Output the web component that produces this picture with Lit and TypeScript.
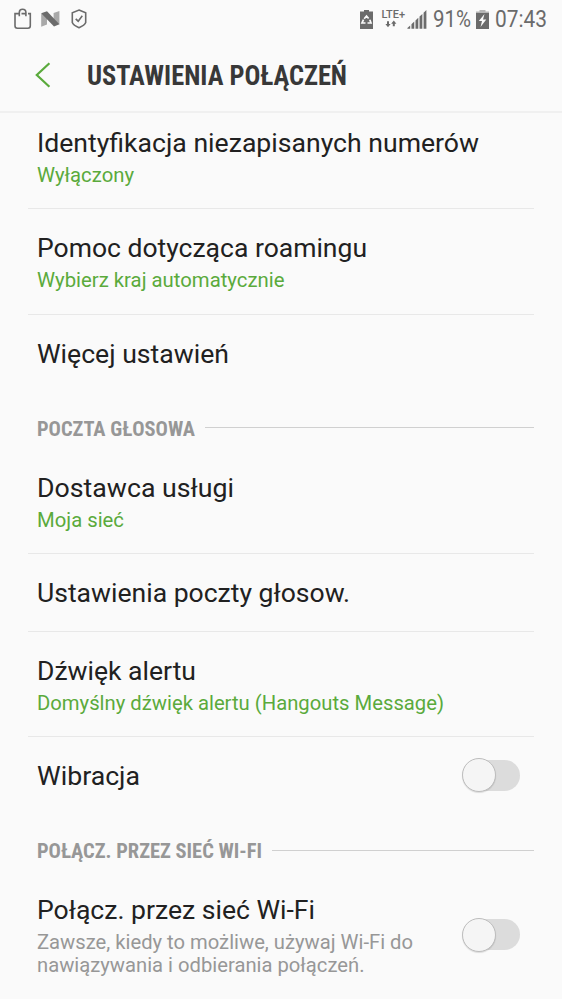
import { LitElement, html, css, svg, nothing } from "lit";
import { customElement, property } from "lit/decorators.js";

@customElement("fit-text")
class FitText extends LitElement {
  @property() text = "";
  @property({ type: Number }) width = 100;
  @property({ type: Number }) size = 20;
  @property({ type: Number }) line = 24;
  static styles = css`
    :host { display: block; flex: none; }
    svg { display: block; overflow: visible; }
    text { font-family: Roboto, "Liberation Sans", sans-serif; font-weight: inherit; font-stretch: inherit; fill: currentColor; }
  `;
  render() {
    const y = this.line / 2 + this.size * 0.345;
    return html`<svg width=${this.width} height=${this.line}>
      <text x="0" y=${y} font-size=${this.size} textLength=${this.width} lengthAdjust="spacingAndGlyphs">${this.text}</text>
    </svg>`;
  }
}

@customElement("toggle-switch")
class ToggleSwitch extends LitElement {
  static styles = css`
    :host { display: flex; align-items: center; width: 58px; height: 34px; flex: none; margin: -3px 0 -1px; }
    .track { width: 50px; height: 31px; margin-left: 8px; border-radius: 16px; background: #dcdcdc; display: flex; align-items: center; }
    .knob { box-sizing: border-box; width: 34px; height: 34px; margin-left: -8px; flex: none; border-radius: 50%; background: #f5f5f5; border: 1px solid #bdbdbd; box-shadow: 0 1px 1px rgba(0,0,0,.12); }
  `;
  render() {
    return html`<div class="track"><div class="knob"></div></div>`;
  }
}

type Label = [string, number];
interface Row { title: Label; subs?: Label[]; muted?: boolean; toggle?: boolean; last?: boolean; first?: boolean }
interface Group { heading?: Label; rows: Row[] }

const groups: Group[] = [
  { rows: [
    { title: ["Identyfikacja niezapisanych numerów", 442], subs: [["Wyłączony", 97]], first: true },
    { title: ["Pomoc dotycząca roamingu", 330], subs: [["Wybierz kraj automatycznie", 247.5]] },
    { title: ["Więcej ustawień", 192], last: true },
  ] },
  { heading: ["POCZTA GŁOSOWA", 158], rows: [
    { title: ["Dostawca usługi", 197], subs: [["Moja sieć", 87]] },
    { title: ["Ustawienia poczty głosow.", 313] },
    { title: ["Dźwięk alertu", 159], subs: [["Domyślny dźwięk alertu (Hangouts Message)", 407]] },
    { title: ["Wibracja", 103], toggle: true, last: true },
  ] },
  { heading: ["POŁĄCZ. PRZEZ SIEĆ WI-FI", 225], rows: [
    { title: ["Połącz. przez sieć Wi-Fi", 278], subs: [["Zawsze, kiedy to możliwe, używaj Wi-Fi do", 376], ["nawiązywania i odbierania połączeń.", 327.5]], muted: true, toggle: true, last: true },
  ] },
];

// Each bar has a top edge that follows the rising diagonal.
const bars = [0, 1, 2, 3, 4].map((i) => {
  const x = 0.4 + i * 4.05;
  const top = (v: number) => 18.5 - v * 0.95;
  return svg`<path d="M${x} 18.7V${top(x)}L${x + 2.8} ${top(x + 2.8)}V18.7Z"/>`;
});

@customElement("app-root")
class AppRoot extends LitElement {
  static styles = css`
    :host { display: block; width: 562px; height: 999px; overflow: hidden; background: #fafafa; color: #212121; font-family: Roboto, sans-serif; }
    svg { display: block; flex: none; }
    .status { height: 38px; display: flex; align-items: center; color: #6b6b6b; padding: 0 15px 0 13px; }
    .spacer { flex: 1; }
    .status .bag { margin-right: 8px; }
    .status .nougat { margin-right: 11px; }
    .saver { margin-right: 8px; }
    .signal { margin: 0 6.5px 0 1px; }
    .pct { margin-right: 5px; }
    .charge { margin-right: 6px; }
    .header { box-sizing: border-box; height: 75px; display: flex; align-items: center; padding-left: 35px; border-bottom: 2px solid #f0f0f0; }
    .header .title { color: #383838; font-weight: 700; font-stretch: 75%; margin: 2px 0 0 36px; }
    .row { box-sizing: border-box; margin: 0 28px; padding: 23px 14px 21.5px 9px; border-bottom: 1px solid #e8e8e8; display: flex; align-items: center; justify-content: space-between; }
    .row.first { padding-top: 13.5px; }
    .row.last { border-bottom-color: transparent; }
    .subs { margin-top: 4px; color: #5aaa3c; }
    .subs.muted { color: #979797; }
    .subs.muted fit-text + fit-text { margin-top: -.7px; }
    .section { height: 56.5px; box-sizing: border-box; padding: 15px 28px 0 37px; display: flex; align-items: center; gap: 10px; color: #979797; font-weight: 700; font-stretch: 75%; }
    .section fit-text { margin-top: 1.5px; }
    .rule { height: 1px; flex: 1; background: #d0d0d0; }
  `;

  private row(r: Row) {
    return html`<div class="row ${r.first ? "first" : ""} ${r.last ? "last" : ""}">
      <div>
        <fit-text .text=${r.title[0]} .width=${r.title[1]} .size=${26.7} .line=${32}></fit-text>
        ${r.subs ? html`<div class="subs ${r.muted ? "muted" : ""}">
          ${r.subs.map((s) => html`<fit-text .text=${s[0]} .width=${s[1]} .size=${20.6} .line=${24}></fit-text>`)}
        </div>` : nothing}
      </div>
      ${r.toggle ? html`<toggle-switch></toggle-switch>` : nothing}
    </div>`;
  }

  render() {
    return html`
      <div class="status">
        <svg class="bag" width="19" height="22" viewBox="0 0 19 22" fill="none" stroke="currentColor" stroke-width="1.6">
          <path d="M6.3 5.6H2V17.7Q2 20.2 4.4 20.2H14.9Q17.3 20.2 17.3 17.7V5.6H15M6.3 8.2V4.5Q6.3 1.3 9.6 1.3T12.9 4.5V8.2M8.5 5.6H12.9"/>
        </svg>
        <svg class="nougat" width="20" height="18" viewBox="0 0 20 18">
          <path fill="#a9a9a9" d="M1.2 3.5L7 6V14.6L1.2 16.8ZM13.6 3L19.4 1V14.5L13.6 12Z"/>
          <path fill="currentColor" d="M1.2 3.2L7 1.2L19.4 14.2L14 16.6Z"/>
        </svg>
        <svg width="16" height="20" viewBox="0 0 16 20" fill="none" stroke="currentColor" stroke-width="1.6">
          <path d="M8 1L14.7 3.7V13.5Q13.7 16.3 8 18.7Q2.3 16.3 1.3 13.5V3.7Z"/><path d="M4.7 9.8L7.2 12.2L11.3 6.8"/>
        </svg>
        <div class="spacer"></div>
        <svg class="saver" width="13" height="19" viewBox="0 0 13 19">
          <path fill="currentColor" d="M4 0H9V1.5H13V19H0V1.5H4Z"/>
          <path fill="none" stroke="#fafafa" stroke-width="1.7" d="M4.2 8.8L6.5 6L8.6 8.5M9.8 9.7L11 13H7.5M5.5 13H2L3.5 9.7"/>
        </svg>
        <svg width="25" height="20" viewBox="0 0 25 20" fill="currentColor">
          <text x="0.5" y="9" font-family="Roboto, sans-serif" font-weight="500" font-size="10.2" textLength="23.5" lengthAdjust="spacingAndGlyphs">LTE+</text>
          <path d="M6 12.2H8V15H9.6L7 18.2L4.4 15H6ZM11.8 17.2H13.8V14.7H15.4L12.8 11.5L10.2 14.7H11.8Z"/>
        </svg>
        <svg class="signal" width="20" height="19" viewBox="0 0 20 19" fill="currentColor">${bars}</svg>
        <fit-text class="pct" .text=${"91%"} .width=${38} .size=${24.5} .line=${38}></fit-text>
        <svg class="charge" width="13" height="19" viewBox="0 0 13 19">
          <path fill="#b5b5b5" d="M3.5 0H9.5V1.5H13V3H0V1.5H3.5Z"/><path fill="currentColor" d="M0 3H13V19H0Z"/>
          <path fill="#fafafa" d="M8.5 4L2.8 11H6L4.5 17L10.3 9.5H7Z"/>
        </svg>
        <fit-text .text=${"07:43"} .width=${52} .size=${24.5} .line=${38}></fit-text>
      </div>
      <div class="header">
        <svg width="16" height="26" viewBox="0 0 16 26" fill="none" stroke="#5aaa3c" stroke-width="2.2"><path d="M14.4 1.3L1.8 13L14.4 24.7"/></svg>
        <fit-text class="title" .text=${"USTAWIENIA POŁĄCZEŃ"} .width=${260} .size=${26.8} .line=${32}></fit-text>
      </div>
      ${groups.map((g) => html`
        ${g.heading ? html`<div class="section"><fit-text .text=${g.heading[0]} .width=${g.heading[1]} .size=${20.4} .line=${24}></fit-text><div class="rule"></div></div>` : nothing}
        ${g.rows.map((r) => this.row(r))}`)}
    `;
  }
}
